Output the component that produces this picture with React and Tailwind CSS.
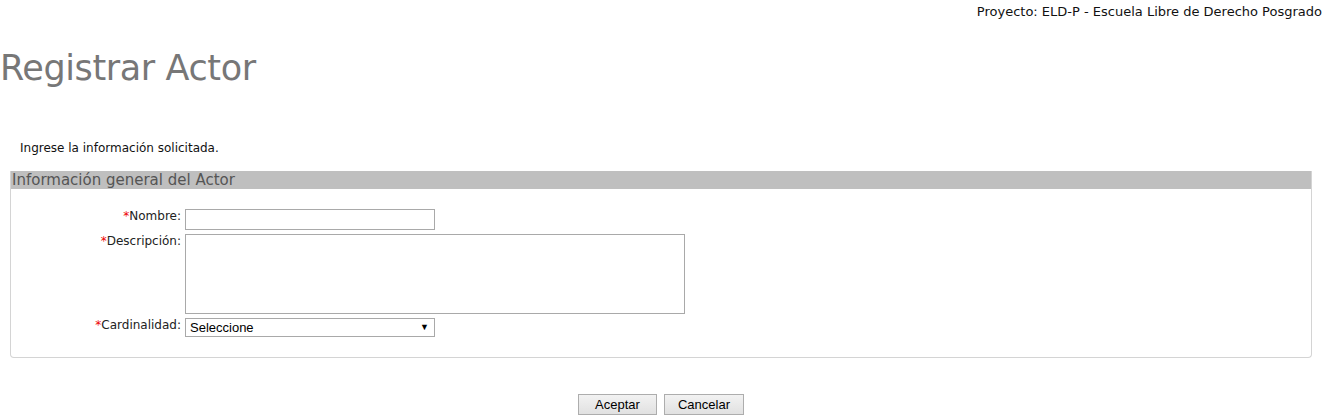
export default function App() {
  const verdana = { fontFamily: '"DejaVu Sans", Verdana, sans-serif' };
  return (
    <div className="min-h-[418px] w-[1328px] bg-white text-[#222]" style={verdana}>
      <div className="flex justify-end pr-[6px] pt-[4px] text-[13px] leading-[16px] text-[#111]">
        Proyecto: ELD-P - Escuela Libre de Derecho Posgrado
      </div>
      <h1 className="mt-[26px] text-[35px] leading-[44px] font-normal text-[#777] tracking-[-0.4px]">
        Registrar Actor
      </h1>
      <p className="mt-[51px] pl-[20px] text-[12px] leading-[15px] text-[#111]">
        Ingrese la información solicitada.
      </p>
      <div className="mx-[10px] mt-[15px] w-[1302px] rounded-b-[4px] border border-t-0 border-[#d4d4d4]">
        <div className="h-[18px] bg-[#bfbfbf] pl-[1px] text-[15px] leading-[18px] text-[#555]">
          Información general del Actor
        </div>
        <div className="grid grid-cols-[170px_auto] gap-x-[4px] pb-[20px] pt-[20px] text-[12px] leading-[15px]">
          <label className="text-right">
            <span className="text-[#e00]">*</span>Nombre:
          </label>
          <div>
            <input className="block h-[21px] w-[250px] border border-[#a9a9a9] px-[2px] text-[13px]" />
          </div>
          <label className="mt-[4px] text-right">
            <span className="text-[#e00]">*</span>Descripción:
          </label>
          <div className="mt-[4px]">
            <textarea className="block h-[80px] w-[500px] resize-none border border-[#a9a9a9] px-[2px]" />
          </div>
          <label className="mt-[4px] text-right">
            <span className="text-[#e00]">*</span>Cardinalidad:
          </label>
          <div className="mt-[4px]">
            <div
              className="flex h-[19px] w-[250px] items-center justify-between border border-[#a9a9a9] pl-[4px] pr-[5px] text-[13px] text-black"
              style={{ fontFamily: '"Liberation Sans", Arial, sans-serif' }}
            >
              <span>Seleccione</span>
              <span className="text-[9px]">▼</span>
            </div>
          </div>
        </div>
      </div>
      <div
        className="mt-[36px] flex justify-center gap-[7px] pr-[6px] text-[13px]"
        style={{ fontFamily: '"Liberation Sans", Arial, sans-serif' }}
      >
        <button className="h-[21px] w-[79px] border border-[#adadad] bg-gradient-to-b from-[#f2f2f2] to-[#e1e1e1] text-black">
          Aceptar
        </button>
        <button className="h-[21px] w-[80px] border border-[#adadad] bg-gradient-to-b from-[#f2f2f2] to-[#e1e1e1] text-black">
          Cancelar
        </button>
      </div>
    </div>
  );
}
